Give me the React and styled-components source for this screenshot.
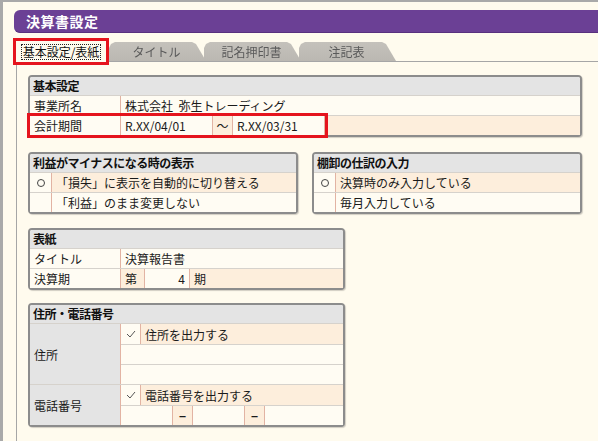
import React from "react";
import styled, { createGlobalStyle } from "styled-components";

const Global = createGlobalStyle`
  html, body { margin: 0; padding: 0; background: #fffbee; }
  * { box-sizing: border-box; }
`;

const Frame = styled.div`
  width: 598px;
  height: 441px;
  background: #fffbee;
  border-top: 2px solid #a9a9a9;
  border-left: 3px solid #a9a9a9;
  padding: 8px 0 0 11px;
  display: flex;
  flex-direction: column;
  overflow: hidden;
  font-family: "Noto Sans CJK JP", "Noto Sans", sans-serif;
  font-size: 12px;
  color: #222;
`;

const TitleBar = styled.div`
  height: 23px;
  background: #6b4095;
  border-bottom: 1px solid #58307e;
  border-radius: 6px 0 0 6px;
  color: #fff;
  font-weight: 700;
  font-size: 14px;
  line-height: 22px;
  padding-left: 12px;
  letter-spacing: 0.5px;
`;

const TabBar = styled.div`
  margin-top: 8px;
  margin-left: 2px;
  height: 21px;
  display: flex;
  align-items: flex-end;
  border-bottom: 1px solid #a6a6a6;
`;

const ActiveTab = styled.div`
  position: relative;
  z-index: 3;
  width: 90px;
  height: 21px;
  margin-bottom: -1px;
  background: #fffbee;
  outline: 3px solid #e5141d;
  display: flex;
  align-items: center;
  justify-content: center;
`;

const FocusText = styled.span`
  border: 1px dotted #222;
  line-height: 14px;
  padding: 0 1px;
  color: #111;
  font-size: 12px;
`;

const Tab = styled.div`
  position: relative;
  z-index: ${(p) => p.$z};
  width: 97px;
  height: 19px;
  margin-left: ${(p) => p.$overlap}px;
  background: linear-gradient(#c4c1bb, #bbb8b2);
  color: #5a5a5a;
  font-size: 12px;
  display: flex;
  align-items: center;
  justify-content: center;
  padding-right: 2px;
  clip-path: polygon(0 100%, 0 6px, 2px 2px, 6px 0, calc(100% - 14px) 0, calc(100% - 10px) 2px, 100% 100%);
  filter: drop-shadow(-1px 0 0 #8a8a8a);
`;

const Panel = styled.div`
  flex: 1;
  margin-left: 2px;
  border-left: 1px solid #a6a6a6;
  padding: 13px 0 0 11px;
  display: flex;
  flex-direction: column;
  align-items: flex-start;
`;

const Section = styled.div`
  width: ${(p) => p.$w}px;
  margin-top: ${(p) => p.$mt || 0}px;
  border: 2px solid #8c8c8c;
  border-radius: 4px;
  box-shadow: 1px 1px 1px rgba(0, 0, 0, 0.18);
  background: #fffcf3;
  display: flex;
  flex-direction: column;
`;

const SectionHead = styled.div`
  height: 18px;
  background: #e4e4e4;
  border-radius: 2px 2px 0 0;
  font-weight: 700;
  line-height: 18px;
  padding-left: 3px;
  color: #111;
  letter-spacing: -0.5px;
`;

const SectionPair = styled.div`
  margin-top: 15px;
  display: flex;
  gap: 14px;
`;

const Row = styled.div`
  display: flex;
  height: 20px;
  border-top: ${(p) => (p.$first ? "none" : "1px solid #d6d2cc")};
`;

const Cell = styled.div`
  width: ${(p) => (p.$w ? `${p.$w}px` : "auto")};
  flex: ${(p) => (p.$w ? "none" : "1")};
  height: 100%;
  background: ${(p) => (p.$tone === "peach" ? "#fdeedc" : p.$tone === "gray" ? "#e4e4e4" : "#fffcf3")};
  border-right: ${(p) => (p.$last ? "none" : "1px solid #e2b3a3")};
  display: flex;
  align-items: center;
  justify-content: ${(p) => (p.$align === "right" ? "flex-end" : p.$align === "center" ? "center" : "flex-start")};
  padding: 0 ${(p) => (p.$align === "center" ? 0 : 4)}px;
  line-height: 19px;
  white-space: nowrap;
  color: #1a1a1a;
`;

const Highlight = styled.div`
  display: flex;
  height: 100%;
  position: relative;
  z-index: 2;
  outline: 3px solid #e5141d;
  outline-offset: 0;
`;

const Radio = styled.span`
  width: 8px;
  height: 8px;
  border: 1px solid #444;
  border-radius: 50%;
`;

const Dash = styled.span`
  font-weight: 700;
  font-size: 12px;
`;

const Group = styled.div`
  display: flex;
  border-top: 1px solid #d6d2cc;
`;

const SideLabel = styled.div`
  width: 91px;
  background: #e4e4e4;
  border-right: 1px solid #e2b3a3;
  display: flex;
  align-items: center;
  padding-left: 4px;
  color: #1a1a1a;
`;

const Stack = styled.div`
  flex: 1;
  display: flex;
  flex-direction: column;
`;

const Check = () => (
  <svg width="10" height="8" viewBox="0 0 10 8">
    <path d="M1 4 L4 7 L9 1" fill="none" stroke="#555" strokeWidth="1" />
  </svg>
);

export default function App() {
  return (
    <>
      <Global />
      <Frame>
        <TitleBar>決算書設定</TitleBar>
        <TabBar>
          <ActiveTab>
            <FocusText>基本設定/表紙</FocusText>
          </ActiveTab>
          <Tab $z={2} $overlap={3}>タイトル</Tab>
          <Tab $z={1} $overlap={-2}>記名押印書</Tab>
          <Tab $z={0} $overlap={-2}>注記表</Tab>
        </TabBar>
        <Panel>
          <Section $w={554}>
            <SectionHead>基本設定</SectionHead>
            <Row>
              <Cell $w={91}>事業所名</Cell>
              <Cell $last>株式会社&nbsp;&nbsp;弥生トレーディング</Cell>
            </Row>
            <Row>
              <Highlight>
                <Cell $w={91}>会計期間</Cell>
                <Cell $w={92}>R.XX/04/01</Cell>
                <Cell $w={20} $tone="peach" $align="center">〜</Cell>
                <Cell $w={92}>R.XX/03/31</Cell>
              </Highlight>
              <Cell $tone="peach" $last />
            </Row>
          </Section>

          <SectionPair>
            <Section $w={270}>
              <SectionHead>利益がマイナスになる時の表示</SectionHead>
              <Row>
                <Cell $w={22} $align="center"><Radio /></Cell>
                <Cell $tone="peach" $last>「損失」に表示を自動的に切り替える</Cell>
              </Row>
              <Row>
                <Cell $w={22} />
                <Cell $last>「利益」のまま変更しない</Cell>
              </Row>
            </Section>
            <Section $w={270}>
              <SectionHead>棚卸の仕訳の入力</SectionHead>
              <Row>
                <Cell $w={22} $align="center"><Radio /></Cell>
                <Cell $tone="peach" $last>決算時のみ入力している</Cell>
              </Row>
              <Row>
                <Cell $w={22} />
                <Cell $last>毎月入力している</Cell>
              </Row>
            </Section>
          </SectionPair>

          <Section $w={317} $mt={14}>
            <SectionHead>表紙</SectionHead>
            <Row>
              <Cell $w={91}>タイトル</Cell>
              <Cell $last>決算報告書</Cell>
            </Row>
            <Row>
              <Cell $w={91}>決算期</Cell>
              <Cell $w={24} $tone="peach">第</Cell>
              <Cell $w={45} $align="right">4</Cell>
              <Cell $tone="peach" $last>期</Cell>
            </Row>
          </Section>

          <Section $w={317} $mt={13}>
            <SectionHead>住所・電話番号</SectionHead>
            <Group>
              <SideLabel>住所</SideLabel>
              <Stack>
                <Row $first>
                  <Cell $w={20} $align="center"><Check /></Cell>
                  <Cell $tone="peach" $last>住所を出力する</Cell>
                </Row>
                <Row>
                  <Cell $last />
                </Row>
                <Row>
                  <Cell $last />
                </Row>
              </Stack>
            </Group>
            <Group>
              <SideLabel>電話番号</SideLabel>
              <Stack>
                <Row $first>
                  <Cell $w={20} $align="center"><Check /></Cell>
                  <Cell $tone="peach" $last>電話番号を出力する</Cell>
                </Row>
                <Row>
                  <Cell $w={52} />
                  <Cell $w={20} $tone="peach" $align="center"><Dash>−</Dash></Cell>
                  <Cell $w={52} />
                  <Cell $w={20} $tone="peach" $align="center"><Dash>−</Dash></Cell>
                  <Cell $last />
                </Row>
              </Stack>
            </Group>
          </Section>
        </Panel>
      </Frame>
    </>
  );
}
